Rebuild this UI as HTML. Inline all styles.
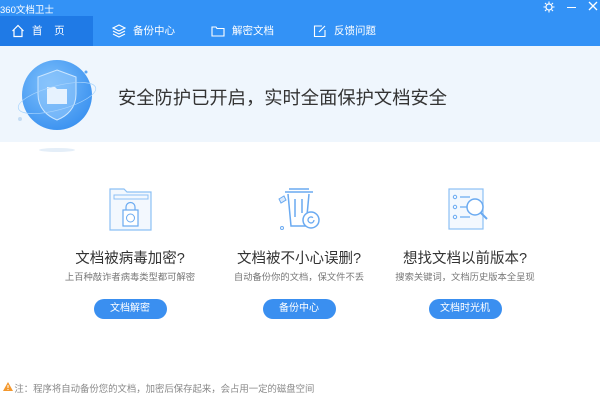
<!DOCTYPE html>
<html><head><meta charset="utf-8"><style>
*{margin:0;padding:0;box-sizing:border-box}
body{width:600px;height:400px;overflow:hidden;background:#fff;font-family:"Liberation Sans","Noto Sans CJK SC",sans-serif;position:relative}
.top{position:absolute;left:0;top:0;width:600px;height:46px;background:#3392f6}
.title{position:absolute;left:0;top:2px;color:#fff;font-size:9.5px}
.home{position:absolute;left:0;top:16px;width:93px;height:30px;background:#1f7ae6}
.nav{position:absolute;top:16px;height:30px;line-height:30px;color:#fff;font-size:10.5px;display:flex;align-items:center}
.nav svg{margin-right:7px}
.banner{position:absolute;left:0;top:46px;width:600px;height:96px;background:#eff6fd}
.head{position:absolute;left:118px;top:84px;font-size:18.3px;color:#333}
.card{position:absolute;top:186px;width:170px;text-align:center}
.card h3{font-weight:normal;font-size:14.5px;color:#333;margin-top:8px;height:20px}
.card p{font-size:9.3px;color:#777;margin-top:2px}
.btn{display:inline-block;margin-top:16px;width:73px;height:20px;line-height:20px;border-radius:10px;background:#3a8ff0;color:#fff;font-size:10px}
.foot{position:absolute;left:4px;top:381px;font-size:9.4px;color:#888}
</style></head><body>
<div class="top"></div>
<div class="title">360文档卫士</div>
<svg style="position:absolute;left:543px;top:1px" width="12" height="12" viewBox="0 0 12 12"><circle cx="6" cy="6" r="3" fill="none" stroke="#fff" stroke-width="1.2"/><path d="M6 0.5v2M6 9.5v2M0.5 6h2M9.5 6h2M2 2l1.4 1.4M8.6 8.6L10 10M2 10l1.4-1.4M8.6 3.4L10 2" stroke="#fff" stroke-width="1.1"/></svg>
<div style="position:absolute;left:567px;top:7px;width:9px;height:1.3px;background:#fff"></div>
<svg style="position:absolute;left:588px;top:1px" width="10" height="10"><path d="M1 1L9 9M9 1L1 9" stroke="#fff" stroke-width="1.3"/></svg>
<div class="home"></div>
<div class="nav" style="left:11px"><svg width="14" height="14" viewBox="0 0 14 14"><path d="M1.5 7L7 1.5 12.5 7M3 5.5V12.5H11V5.5" fill="none" stroke="#fff" stroke-width="1.2"/></svg>首&nbsp;&nbsp;&nbsp;&nbsp;页</div>
<div class="nav" style="left:112px"><svg width="14" height="14" viewBox="0 0 14 14"><path d="M7 1L13 4 7 7 1 4z M1 7l6 3 6-3 M1 10l6 3 6-3" fill="none" stroke="#fff" stroke-width="1.1"/></svg>备份中心</div>
<div class="nav" style="left:211px"><svg width="14" height="14" viewBox="0 0 14 14"><path d="M1 3h4l1 1.5h7V12H1z" fill="none" stroke="#fff" stroke-width="1.1"/></svg>解密文档</div>
<div class="nav" style="left:313px"><svg width="14" height="14" viewBox="0 0 14 14"><path d="M9 2H1.5V12.5H12V6M6 8l6-6" fill="none" stroke="#fff" stroke-width="1.1"/></svg>反馈问题</div>
<div class="banner"></div>
<svg style="position:absolute;left:14px;top:54px" width="90" height="100" viewBox="0 0 90 100">
<defs><radialGradient id="g" cx="40%" cy="35%" r="70%"><stop offset="0" stop-color="#7ec0fb"/><stop offset="1" stop-color="#3a91f0"/></radialGradient></defs>
<ellipse cx="43" cy="96" rx="18" ry="2" fill="#e4eef8"/>
<circle cx="43" cy="41" r="35" fill="url(#g)"/>
<path d="M43 16L62 23V40C62 54 53 62 43 66 33 62 24 54 24 40V23z" fill="#8fc6fb" fill-opacity=".6" stroke="#cbe6ff" stroke-width="1"/>
<path d="M33 33h8l2 2h10v15H33z" fill="#e6f2fe"/>
<ellipse cx="43" cy="44" rx="40" ry="12" fill="none" stroke="#a8d4fd" stroke-width=".7" transform="rotate(-15 43 44)"/>
<circle cx="72" cy="18" r="1.5" fill="#5aa6f5"/><circle cx="6" cy="65" r="2" fill="#c4dcf4"/>
</svg>
<div class="head">安全防护已开启，实时全面保护文档安全</div>

<div class="card" style="left:45px">
<svg width="64" height="48" viewBox="0 0 64 48"><path d="M12 3h14l3 3h24v38H12z" fill="#f3f8fe" stroke="#8cc0f5" stroke-width="1.2"/><path d="M16 9h34v4H16z" fill="none" stroke="#8cc0f5"/><rect x="25" y="24" width="15" height="16" fill="#fff" stroke="#6aaaf1" stroke-width="1.2"/><path d="M28 24v-3a4.5 4.5 0 0 1 9 0v3" fill="none" stroke="#6aaaf1" stroke-width="1.2"/><circle cx="32.5" cy="32" r="4" fill="none" stroke="#6aaaf1"/></svg>
<h3>文档被病毒加密?</h3><p>上百种敲诈者病毒类型都可解密</p><span class="btn">文档解密</span></div>

<div class="card" style="left:214px">
<svg width="64" height="48" viewBox="0 0 64 48"><path d="M22 3h20M18 6h28M21 8l3 32h15l3-32" fill="none" stroke="#6aaaf1" stroke-width="1.5"/><path d="M28 13v18M35 13v14" stroke="#6aaaf1" stroke-width="1.5"/><circle cx="44" cy="34" r="8" fill="#fff" stroke="#6aaaf1" stroke-width="1.5"/><path d="M47 34a3 3 0 1 1-1-2.3" fill="none" stroke="#6aaaf1" stroke-width="1.3"/><path d="M12 13l5-3 2 4-5 3z" fill="#dbeafc" stroke="#6aaaf1"/><circle cx="15" cy="42" r="1.5" fill="none" stroke="#6aaaf1"/></svg>
<h3>文档被不小心误删?</h3><p>自动备份你的文档，保文件不丢</p><span class="btn">备份中心</span></div>

<div class="card" style="left:380px">
<svg width="64" height="48" viewBox="0 0 64 48"><rect x="16" y="3" width="34" height="40" fill="#f3f8fe" stroke="#8cc0f5" stroke-width="1.2"/><circle cx="22" cy="11" r="1.7" fill="none" stroke="#6aaaf1"/><circle cx="22" cy="21" r="1.7" fill="none" stroke="#6aaaf1"/><circle cx="22" cy="31" r="1.7" fill="none" stroke="#6aaaf1"/><path d="M27 11h10M27 21h10M27 31h10" stroke="#6aaaf1" stroke-width="1.2"/><circle cx="42" cy="21" r="8" fill="#fff" stroke="#6aaaf1" stroke-width="1.5"/><path d="M48 27l6 6" stroke="#6aaaf1" stroke-width="2"/></svg>
<h3>想找文档以前版本?</h3><p>搜索关键词，文档历史版本全呈现</p><span class="btn">文档时光机</span></div>

<svg style="position:absolute;left:3px;top:382px" width="10" height="9"><path d="M5 0L10 9H0z" fill="#f3982e"/><path d="M5 3v3M5 7v1" stroke="#fff"/></svg>
<div class="foot">&nbsp;&nbsp;&nbsp;&nbsp;注：程序将自动备份您的文档，加密后保存起来，会占用一定的磁盘空间</div>
</body></html>
